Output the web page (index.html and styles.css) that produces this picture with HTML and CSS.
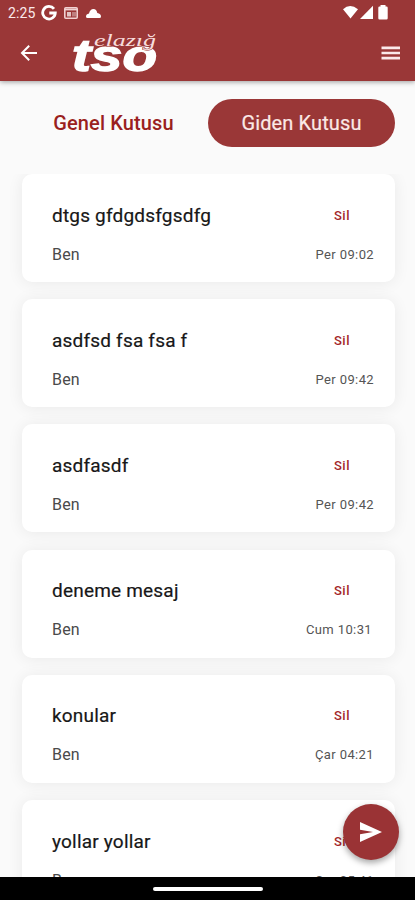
FILE: index.html
```
<!DOCTYPE html>
<html lang="tr">
<head>
<meta charset="utf-8">
<title>Giden Kutusu</title>
<link rel="stylesheet" href="styles.css">
</head>
<body>
<div class="app">
  <header class="header">
    <div class="status">
      <span class="clock">2:25</span>
      <svg class="google" viewBox="0 0 16 16"><path d="M13 3.900A6.300 6.300 0 1 0 14.300 8H8.300" fill="none" stroke="#fff" stroke-width="2.800"/></svg>
      <svg class="news" viewBox="0 0 14 12"><rect x=".8" y=".8" width="12.400" height="10.400" rx="1" fill="none" stroke="#fbe3e3" stroke-width="1.600"/><path d="M1 2.500h12" stroke="#fbe3e3" stroke-width="1.800"/><path d="M3 5h4v4.500H3z" fill="#fff" opacity=".8"/><path d="M8 5h4v4.500H8z" fill="#fff" opacity=".4"/></svg>
      <svg class="cloud" viewBox="0 0 15 9"><path d="M1.500 9Q0 9 0 7.500 0 5 3 4.500 4 0 7.500 0 10.500 0 11.300 4 15 4.500 15 7.500 15 9 13.500 9z" fill="#fff"/></svg>
      <svg class="signals" viewBox="0 0 46 16"><path d="M0 4.200Q7-2 15 4.200L7.500 13.500z" fill="#fff"/><path d="M30 .8V14H17z" fill="#fff"/><path d="M37.500 1.500V0h5v1.500h1q1.200 0 1.200 1.200v10.600q0 1.200-1.200 1.200h-7q-1.200 0-1.200-1.200V2.700q0-1.200 1.200-1.200z" fill="#fff"/></svg>
    </div>
    <div class="bar">
      <svg class="back" viewBox="0 0 18 18"><path d="M17 9H2M9.200 1.800L2 9l7.200 7.200" fill="none" stroke="#fff" stroke-width="2"/></svg>
      <svg class="logo" viewBox="0 0 90 46">
        <text class="logo-main" x="1" y="41" textLength="85" lengthAdjust="spacingAndGlyphs">tso</text>
        <text class="logo-city" x="23" y="16" textLength="62" lengthAdjust="spacingAndGlyphs">elazığ</text>
      </svg>
      <svg class="menu" viewBox="0 0 20 16"><path d="M.5 2.900h18.500M.5 8h18.500M.5 13.100h18.500" stroke="#fbe9ea" stroke-width="2.600"/></svg>
    </div>
  </header>
  <nav class="tabs">
    <span class="tab">Genel Kutusu</span>
    <span class="tab active">Giden Kutusu</span>
  </nav>
  <main class="list">
    <article class="card"><h2>dtgs gfdgdsfgsdfg</h2><span class="del">Sil</span><span class="from">Ben</span><time>Per 09:02</time></article>
    <article class="card"><h2>asdfsd fsa fsa f</h2><span class="del">Sil</span><span class="from">Ben</span><time>Per 09:42</time></article>
    <article class="card"><h2>asdfasdf</h2><span class="del">Sil</span><span class="from">Ben</span><time>Per 09:42</time></article>
    <article class="card"><h2>deneme mesaj</h2><span class="del">Sil</span><span class="from">Ben</span><time class="early">Cum 10:31</time></article>
    <article class="card"><h2>konular</h2><span class="del">Sil</span><span class="from">Ben</span><time>Çar 04:21</time></article>
    <article class="card"><h2>yollar yollar</h2><span class="del">Sil</span><span class="from">Ben</span><time>Çar 05:41</time></article>
  </main>
  <div class="fab"><svg viewBox="0 0 22 20"><path d="M0 0l22 10L0 20v-7.700L13 10 0 7.700z" fill="#fff"/></svg></div>
  <footer class="system"><span class="handle"></span></footer>
</div>
</body>
</html>
```
FILE: styles.css
```
* { box-sizing: border-box; }
body { margin: 0; font-family: Roboto, sans-serif; }
.app {
  position: relative;
  display: flex;
  flex-direction: column;
  width: 415px;
  height: 900px;
  overflow: hidden;
  background: #fafafa;
}
.header {
  flex: none;
  height: 81px;
  background: #9a3737;
  color: #fff;
  box-shadow: 0 1px 5px rgba(0, 0, 0, .38);
  z-index: 1;
}
.status { display: flex; align-items: center; height: 26px; padding-left: 8px; }
.clock { width: 33px; font-size: 14px; letter-spacing: .1px; color: #fbe9ea; }
.google { width: 16px; height: 16px; }
.news { width: 14px; height: 12px; margin-left: 7px; opacity: .9; }
.cloud { width: 15px; height: 9px; margin-left: 8px; }
.signals { width: 46px; height: 16px; margin-left: auto; margin-right: 26px; }
.bar { display: flex; align-items: center; height: 54px; padding: 0 14px 0 20px; }
.back { width: 18px; height: 18px; }
.logo { width: 90px; height: 46px; margin-left: 33px; overflow: visible; }
.logo-main { font: italic bold 44px "Liberation Sans", sans-serif; fill: #fff; stroke: #fff; stroke-width: 1.4px; }
.logo-city { font: italic 17px "Liberation Serif", serif; fill: #f7dcdc; stroke: #9a3737; stroke-width: 1px; paint-order: stroke; }
.menu { width: 20px; height: 16px; margin-left: auto; }
.tabs { display: flex; flex: none; height: 93px; padding: 18px 20px 0; }
.tab {
  width: 187px;
  height: 48px;
  border-radius: 24px;
  font-size: 20px;
  font-weight: 500;
  line-height: 48px;
  letter-spacing: .12px;
  text-align: center;
  color: #9a1f20;
}
.tab.active { margin-left: 1px; background: #9a3737; color: #fbe9e7; font-weight: 400; -webkit-text-stroke: .2px #fbe9e7; }
.list {
  display: flex;
  flex: 1;
  flex-direction: column;
  gap: 17.2px;
  min-height: 0;
  padding: 0 20px 0 22px;
  overflow: hidden;
}
.card {
  display: grid;
  flex: none;
  grid-template-columns: 1fr auto;
  grid-template-rows: 42px 36px;
  align-items: center;
  height: 108px;
  padding: 20.2px 21px 0 30px;
  border-radius: 10px;
  background: #fff;
  box-shadow: 0 1px 16px rgba(0, 0, 0, .07);
}
.card h2 { margin: 0; font-size: 19px; font-weight: 400; color: #171717; letter-spacing: .2px; -webkit-text-stroke: .2px #171717; }
.del { justify-self: end; margin-right: 24px; font-size: 13px; font-weight: 500; letter-spacing: .5px; color: #a32629; }
.from { font-size: 16px; letter-spacing: .2px; color: #4a4a4a; }
.card time { font-size: 13px; letter-spacing: .38px; color: #555; text-align: right; }
.card .early { padding-right: 2px; }
.card:has(.early) .del { margin-right: 24px; }
.fab {
  position: absolute;
  right: 16px;
  bottom: 40px;
  display: flex;
  align-items: center;
  justify-content: center;
  width: 56px;
  height: 56px;
  border-radius: 50%;
  background: #9a3335;
  box-shadow: 0 3px 6px rgba(0, 0, 0, .35);
}
.fab svg { width: 22px; height: 20px; }
.system { display: flex; flex: none; justify-content: center; height: 23px; padding-top: 10px; background: #000; }
.handle { width: 110px; height: 4px; border-radius: 2px; background: #fff; }
```
